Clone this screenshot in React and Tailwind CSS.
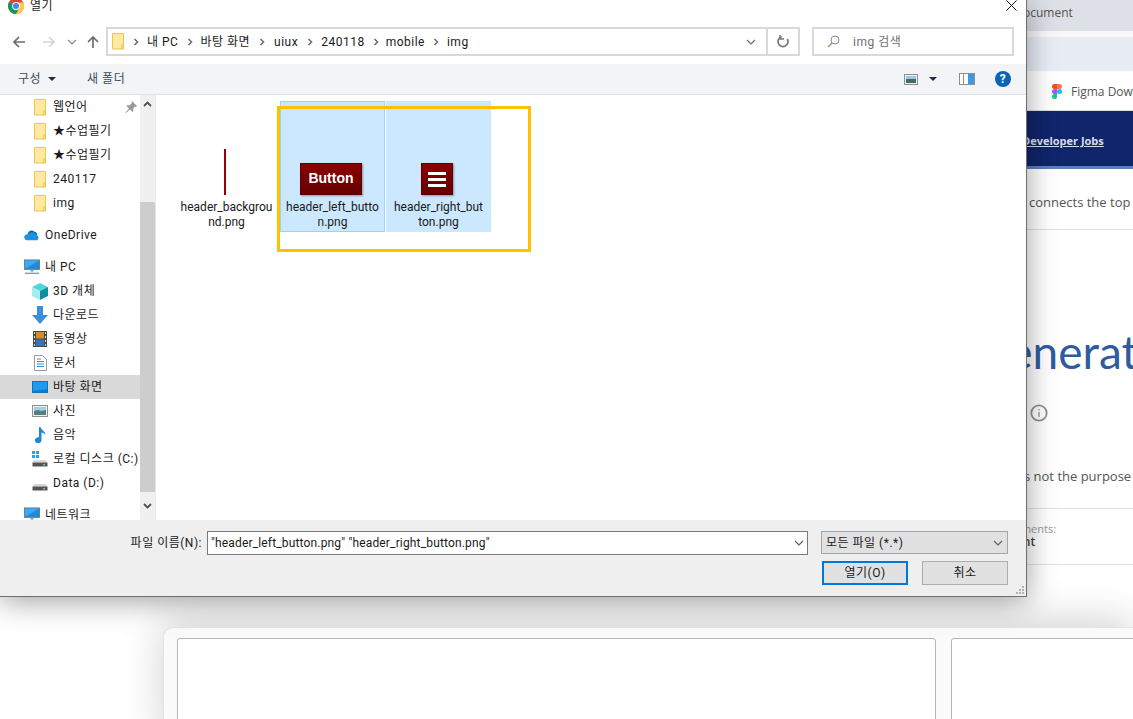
import React from 'react';

const uiFont = 'font-["Roboto","Noto_Sans_CJK_KR",sans-serif]';

const Folder = () => (
  <svg width="14" height="17" viewBox="0 0 14 17" className="shrink-0">
    <path d="M1.5.5h11v15.5h-11z" fill="#ffe9a3" stroke="#eec64c" />
    <path d="M10.5 16V11.5h2V16z" fill="#ffd766" stroke="#eec64c" strokeWidth="0.6" />
  </svg>
);

const Chevron = () => (
  <svg width="6" height="8" viewBox="0 0 6 8" className="shrink-0">
    <path d="M1.5 1l3 3-3 3" fill="none" stroke="#6f6f6f" strokeWidth="1.6" />
  </svg>
);

const DownChevron = ({ color = '#606060' }) => (
  <svg width="10" height="6" viewBox="0 0 10 6" className="shrink-0">
    <path d="M1 1l4 4 4-4" fill="none" stroke={color} strokeWidth="1.2" />
  </svg>
);

const Caret = () => (
  <svg width="8" height="4" viewBox="0 0 8 4" className="shrink-0">
    <path d="M0 0h8L4 4z" fill="#1c2b4a" />
  </svg>
);

const ChromeIcon = () => (
  <svg width="16" height="16" viewBox="0 0 16 16" className="shrink-0">
    <circle cx="8" cy="8" r="8" fill="#db4437" />
    <path d="M8 8L1 4.2A8 8 0 0 0 8 16l3.6-6.5z" fill="#0f9d58" />
    <path d="M8 4.5h7.3A8 8 0 0 1 8 16l3.4-6z" fill="#ffcd40" />
    <circle cx="8" cy="8" r="3.9" fill="#fff" />
    <circle cx="8" cy="8" r="3" fill="#4285f4" />
  </svg>
);

const SideIcon = ({ type }) => {
  if (type === 'onedrive')
    return (
      <svg width="17" height="12" viewBox="0 0 17 12">
        <path d="M4 5a4 4 0 0 1 7-2.5A3.5 3.5 0 0 1 14 6H5z" fill="#0c64b8" />
        <path d="M3.5 11.5a3 3 0 0 1-.5-6 3 3 0 0 1 3-1 4 4 0 0 1 7 1.500 3 3 0 0 1 1 5.500z" fill="#1f8fe0" />
      </svg>
    );
  if (type === 'pc')
    return (
      <svg width="17" height="16" viewBox="0 0 17 16">
        <rect x="0.5" y="0.5" width="16" height="10" fill="#3fa9f0" stroke="#5d7f95" />
        <path d="M1 10L16 1v9z" fill="#1f8ad9" />
        <path d="M7 11h3v2H7z" fill="#7fa3b8" />
        <path d="M1 14h15v1.500H1z" fill="#8a9aa6" />
      </svg>
    );
  if (type === '3d')
    return (
      <svg width="16" height="17" viewBox="0 0 16 17">
        <path d="M8 0l8 4-8 4-8-4z" fill="#4fd6dd" />
        <path d="M0 4l8 4v9l-8-4z" fill="#a5ebee" />
        <path d="M16 4L8 8v9l8-4z" fill="#0d8f9c" />
      </svg>
    );
  if (type === 'download')
    return (
      <svg width="16" height="18" viewBox="0 0 16 18">
        <path d="M5 0h6v9h5l-8 9-8-9h5z" fill="#3c8fdc" />
      </svg>
    );
  if (type === 'video')
    return (
      <svg width="14" height="16" viewBox="0 0 14 16">
        <rect width="14" height="16" fill="#4a4a4a" />
        <rect x="3" y="1" width="8" height="6.500" fill="#d98a2b" />
        <rect x="3" y="8.500" width="8" height="6.500" fill="#3277b8" />
        <path d="M1 1h1v2H1zM1 5h1v2H1zM1 9h1v2H1zM1 13h1v2H1zM12 1h1v2h-1zM12 5h1v2h-1zM12 9h1v2h-1zM12 13h1v2h-1z" fill="#ddd" />
      </svg>
    );
  if (type === 'doc')
    return (
      <svg width="13" height="16" viewBox="0 0 13 16">
        <path d="M.5.5h8l4 4v11H.5z" fill="#fff" stroke="#9a9a9a" />
        <path d="M3 4h4M3 6.500h7M3 9h7M3 11.500h7" stroke="#2f8fd8" />
      </svg>
    );
  if (type === 'desktop')
    return (
      <svg width="16" height="12" viewBox="0 0 16 12">
        <rect x="0.5" y="0.500" width="15" height="11" fill="#1c9bf0" stroke="#1a6fb5" />
        <path d="M1 10l14-2v3H1z" fill="#0d7dd0" />
      </svg>
    );
  if (type === 'photo')
    return (
      <svg width="16" height="12" viewBox="0 0 16 12">
        <rect x="0.5" y="0.500" width="15" height="11" fill="#e8f2f8" stroke="#8f8f8f" />
        <rect x="2" y="2" width="12" height="4" fill="#a8cde4" />
        <path d="M2 6l4-1 3 1 5-1v5H2z" fill="#547f7a" />
      </svg>
    );
  if (type === 'music')
    return (
      <svg width="13" height="16" viewBox="0 0 13 16">
        <path d="M5 0h1.500c.5 3 5 4 5 8-1-1.500-3-2.500-4-2.500V13a3.300 3 0 1 1-2.500-2.700z" fill="#1f86dc" />
      </svg>
    );
  const win = type === 'c';
  return (
    <svg width="16" height="16" viewBox="0 0 16 16">
      {win && <path d="M0 0h3v3H0zM4 0h3v3H4zM0 4h3v3H0zM4 4h3v3H4z" fill="#1fa5e8" />}
      <path d="M2 9h12l1.500 2.500H.5z" fill="#d8d8d8" />
      <rect x="0.500" y="11.500" width="15" height="4" fill="#555" />
      <rect x="11" y="13" width="2" height="1.500" fill="#5fd35f" />
    </svg>
  );
};

const NavRow = ({ icon, indent, active, children, pin }) => (
  <div className={`relative flex h-6 items-center whitespace-nowrap tracking-[0.5px] ${indent ? 'pl-[32px] gap-[5px]' : 'pl-[24px] gap-[5px]'} ${active ? 'bg-[#d9d9d9]' : ''}`}>
    <span className="flex w-[16px] shrink-0 justify-center">{icon}</span>
    <span>{children}</span>
    {pin && (
      <svg width="12" height="12" viewBox="0 0 12 12" className="absolute left-[125px] top-[6px]">
        <path d="M7 0l5 5-1 1-1-.5L8 8l.500 2-1 1L5 8.500 1 12 .500 11.500 4 7.500 1.500 5l1-1 2 .500L7 2 6.500 1z" fill="#9a9a9a" />
      </svg>
    )}
  </div>
);

const FileCell = ({ selected, focused, children, lines }) => (
  <div className={`flex h-[131px] w-[105px] shrink-0 flex-col items-center border ${selected ? 'bg-[#cce8ff]' : ''} ${focused ? 'border-[#99d1ff]' : 'border-transparent'}`}>
    <div className="flex h-[97px] w-full items-end justify-center pb-[4px] pr-[3px]">{children}</div>
    <div className="pt-[1px] text-center text-[12px] leading-[15px] text-[#1a1a1a]">
      {lines.map((l) => (
        <div key={l}>{l}</div>
      ))}
    </div>
  </div>
);

// the page behind the dialog, only its right edge and the bottom can be seen
const BackPage = () => (
  <div className='flex h-[719px] w-[1133px] flex-col overflow-hidden bg-white font-["Open_Sans",sans-serif] text-[#555]'>
    <div className="flex h-[31px] shrink-0 items-center whitespace-nowrap bg-[#dde0e7] pb-[5px] pl-[1023px] text-[12px] text-[#555]">
      ocument
    </div>
    <div className="h-[6px] shrink-0 bg-[#f8f8f8]" />
    <div className="h-[34px] shrink-0 bg-[#e8ecf5]" />
    <div className="flex h-[40px] shrink-0 items-center gap-[9px] whitespace-nowrap border-b border-[#dcdcdc] pl-[1052px] pt-[2px] text-[12px]">
      <svg width="10" height="15" viewBox="0 0 10 15" className="shrink-0">
        <path d="M5 0H2.500a2.500 2.500 0 0 0 0 5H5z" fill="#f24e1e" />
        <path d="M5 0h2.500a2.500 2.500 0 0 1 0 5H5z" fill="#ff7262" />
        <path d="M5 5H2.500a2.500 2.500 0 0 0 0 5H5z" fill="#a259ff" />
        <circle cx="7.500" cy="7.500" r="2.500" fill="#1abcfe" />
        <path d="M5 10H2.500A2.500 2.500 0 1 0 5 12.500z" fill="#0acf83" />
      </svg>
      Figma Download
    </div>
    <div className="flex h-[58px] shrink-0 items-center whitespace-nowrap border-b-[3px] border-[#5b7fb8] bg-[#10256b] pl-[1022px] pt-[6px] text-[11px] font-bold text-[#d6dcec] underline">
      Developer Jobs
    </div>
    <div className="flex h-[61px] shrink-0 items-center whitespace-nowrap border-b border-[#e2e2e2] pl-[1029px] pt-[8px] text-[13px]">
      connects the top
    </div>
    <div className="flex h-[279px] shrink-0 flex-col whitespace-nowrap border-b border-[#e2e2e2]">
      <div className="h-[177px] pl-[975px] pt-[94px] font-['Lato',sans-serif] text-[46px] leading-[56px] text-[#2f5c9f]">Generate</div>
      <svg width="18" height="18" viewBox="0 0 18 18" className="ml-[1030px] mt-[-3px] shrink-0">
        <circle cx="9" cy="9" r="7.700" fill="none" stroke="#8d9499" strokeWidth="1.800" />
        <path d="M9 5v1.500M9 8v5" stroke="#8d9499" strokeWidth="1.300" />
      </svg>
      <div className="pl-[1024px] pt-[45px] text-[13px] leading-[18px]">s not the purpose</div>
    </div>
    <div className="flex h-[56px] shrink-0 flex-col justify-start whitespace-nowrap border-b border-[#e2e2e2] pl-[988px] pt-[13px] text-[11px] leading-[13px] text-[#999]">
      <span className="block h-[13px]">Attachments:</span>
      <span className="block h-[13px] text-[12px] font-semibold text-[#444]">Account</span>
    </div>
    <div className="h-[62px] shrink-0 bg-white" />
    <div className="min-h-0 flex-1 pl-[163px]">
      <div className="flex h-[120px] gap-[15px] rounded-tl-[10px] border-l border-t border-[#e4e4e4] bg-[#fafafa] pl-[13px] pt-[10px] shadow-[0_-6px_40px_rgba(0,0,0,0.18)]">
        <div className="h-[120px] w-[759px] shrink-0 rounded-t-[3px] border border-[#b5b5b5] bg-white" />
        <div className="h-[120px] w-[400px] shrink-0 rounded-t-[3px] border border-[#b5b5b5] bg-white" />
      </div>
    </div>
  </div>
);

const FileDialog = () => (
  <div className={`absolute left-0 top-0 flex h-[597px] w-[1027px] flex-col overflow-hidden border-b border-r border-[#6e6e6e] bg-white text-[12px] text-[#1a1a1a] shadow-[0_4px_28px_rgba(0,0,0,0.38)] ${uiFont}`}>
    {/* title bar */}
    <div className="flex h-[14px] shrink-0 items-center justify-between overflow-visible pl-[8px] pr-[9px]">
      <div className="flex items-center gap-[6px]">
        <span className="mt-[-2px]"><ChromeIcon /></span>
        <span className="mt-[-3px] text-[12px] tracking-[0.5px]">열기</span>
      </div>
      <svg width="11" height="11" viewBox="0 0 11 11" className="mt-[-3px]">
        <path d="M.5.500l10 10M10.500.500l-10 10" stroke="#111" strokeWidth="1" />
      </svg>
    </div>

    {/* address row */}
    <div className="flex h-[50px] shrink-0 items-start pt-[13px]">
      <div className="flex h-[29px] w-[106px] shrink-0 items-center pl-[13px]">
        <svg width="12" height="12" viewBox="0 0 12 12" className="shrink-0">
          <path d="M12 6H1.500M6 1L1 6l5 5" fill="none" stroke="#6d6d6d" strokeWidth="1.700" />
        </svg>
        <svg width="12" height="12" viewBox="0 0 12 12" className="ml-[18px] shrink-0">
          <path d="M0 6h10.500M6 1l5 5-5 5" fill="none" stroke="#d5d5d5" strokeWidth="1.700" />
        </svg>
        <span className="ml-[12px]"><DownChevron color="#8a8a8a" /></span>
        <svg width="12" height="12" viewBox="0 0 12 12" className="ml-[10px] shrink-0">
          <path d="M6 12V1.500M1 6l5-5 5 5" fill="none" stroke="#6d6d6d" strokeWidth="1.700" />
        </svg>
      </div>
      <div className="flex h-[29px] w-[694px] shrink-0 items-center border-2 border-[#d9d9d9]">
        <div className="flex flex-1 items-center gap-[6px] whitespace-nowrap pl-[3px] text-[12px] tracking-[0.5px]">
          <Folder />
          <span className="ml-[2px]"><Chevron /></span>
          <span className="ml-[2px]">내 PC</span>
          <span className="ml-[3px]"><Chevron /></span>
          <span className="ml-[1px]">바탕 화면</span>
          <span className="ml-[3px]"><Chevron /></span>
          <span className="ml-[3px]">uiux</span>
          <span className="ml-[3px]"><Chevron /></span>
          <span className="ml-[2px]">240118</span>
          <span className="ml-[2px]"><Chevron /></span>
          <span className="ml-[1px]">mobile</span>
          <span className="ml-[2px]"><Chevron /></span>
          <span className="ml-[2px]">img</span>
        </div>
        <span className="pr-[10px]"><DownChevron color="#6d6d6d" /></span>
        <div className="flex h-full w-[32px] shrink-0 items-center justify-center border-l-2 border-[#d9d9d9]">
          <svg width="12" height="13" viewBox="0 0 12 13">
            <path d="M3 2.500A5 5 0 1 0 9 2.700" fill="none" stroke="#777" strokeWidth="1.700" transform="rotate(20 6 7)" />
            <path d="M3 0v4h4" fill="none" stroke="#777" strokeWidth="1.400" />
          </svg>
        </div>
      </div>
      <div className="ml-[12px] flex h-[29px] w-[202px] shrink-0 items-center gap-[13px] border-2 border-[#d9d9d9] pl-[13px] tracking-[0.5px] text-[#707070]">
        <svg width="13" height="13" viewBox="0 0 13 13" className="shrink-0">
          <circle cx="8" cy="5" r="4" fill="none" stroke="#8a8a8a" />
          <path d="M5 8l-4 4" stroke="#b08a60" strokeWidth="1.200" />
        </svg>
        img 검색
      </div>
    </div>

    {/* command bar */}
    <div className="flex h-[31px] shrink-0 items-center border-b border-[#e2e2e2] bg-[#f3f4f6] pl-[18px] pr-[15px] tracking-[0.5px] text-[#3b4b63]">
      <span>구성</span>
      <span className="ml-[7px]"><Caret /></span>
      <span className="ml-[31px]">새 폴더</span>
      <div className="ml-auto flex items-center">
        <svg width="14" height="11" viewBox="0 0 14 11" className="shrink-0">
          <rect x="0.500" y="0.500" width="13" height="10" fill="#eef4f8" stroke="#8f8f8f" />
          <rect x="2" y="2" width="10" height="3" fill="#9cc6e2" />
          <path d="M2 5h10v4H2z" fill="#3f6b6b" />
        </svg>
        <span className="ml-[11px]"><Caret /></span>
        <svg width="16" height="12" viewBox="0 0 16 12" className="ml-[22px] shrink-0">
          <rect x="0.500" y="0.500" width="15" height="11" fill="#fff" stroke="#8f8f8f" />
          <rect x="9" y="1" width="6" height="10" fill="#3f97e8" />
          <path d="M4.500 1v10" stroke="#8f8f8f" />
        </svg>
        <span className="ml-[20px] flex h-[16px] w-[16px] items-center justify-center rounded-full bg-[#0a63b5] text-[12px] font-bold text-white">?</span>
      </div>
    </div>

    {/* sidebar + file list */}
    <div className="flex min-h-0 flex-1 overflow-hidden">
      <div className="w-[140px] shrink-0 overflow-hidden text-[12px]">
        <NavRow indent icon={<Folder />} pin>웹언어</NavRow>
        <NavRow indent icon={<Folder />}>★수업필기</NavRow>
        <NavRow indent icon={<Folder />}>★수업필기</NavRow>
        <NavRow indent icon={<Folder />}>240117</NavRow>
        <NavRow indent icon={<Folder />}>img</NavRow>
        <div className="h-2" />
        <NavRow icon={<SideIcon type="onedrive" />}>OneDrive</NavRow>
        <div className="h-2" />
        <NavRow icon={<SideIcon type="pc" />}>내 PC</NavRow>
        <NavRow indent icon={<SideIcon type="3d" />}>3D 개체</NavRow>
        <NavRow indent icon={<SideIcon type="download" />}>다운로드</NavRow>
        <NavRow indent icon={<SideIcon type="video" />}>동영상</NavRow>
        <NavRow indent icon={<SideIcon type="doc" />}>문서</NavRow>
        <NavRow indent active icon={<SideIcon type="desktop" />}>바탕 화면</NavRow>
        <NavRow indent icon={<SideIcon type="photo" />}>사진</NavRow>
        <NavRow indent icon={<SideIcon type="music" />}>음악</NavRow>
        <NavRow indent icon={<SideIcon type="c" />}>로컬 디스크 (C:)</NavRow>
        <NavRow indent icon={<SideIcon type="d" />}>Data (D:)</NavRow>
        <div className="h-2" />
        <NavRow icon={<SideIcon type="pc" />}>네트워크</NavRow>
      </div>

      <div className="flex w-[15px] shrink-0 flex-col items-center bg-[#f0f0f0]">
        <div className="flex h-[18px] shrink-0 items-center justify-center">
          <svg width="9" height="6" viewBox="0 0 9 6"><path d="M1 5l3.500-3.500L8 5" fill="none" stroke="#505050" strokeWidth="1.800" /></svg>
        </div>
        <div className="mt-[89px] h-[290px] w-full shrink-0 bg-[#cdcdcd]" />
        <div className="flex flex-1 items-center justify-center">
          <svg width="9" height="6" viewBox="0 0 9 6"><path d="M1 1l3.500 3.500L8 1" fill="none" stroke="#505050" strokeWidth="1.800" /></svg>
        </div>
      </div>

      <div className="flex min-w-0 flex-1 gap-px border-l border-[#e8e8e8] pl-[18px] pt-[6px]">
        <FileCell lines={['header_backgrou', 'nd.png']}>
          <div className="h-[46px] w-[2px] bg-[#9a0000]" />
        </FileCell>
        <FileCell selected focused lines={['header_left_butto', 'n.png']}>
          <div className="flex h-[32px] w-[62px] items-center justify-center border border-[#5c0000] bg-gradient-to-b from-[#8c0000] to-[#650000] pb-[1px] font-[Liberation_Sans,sans-serif] text-[14px] font-bold text-white shadow-[1px_1px_2px_rgba(0,0,0,0.35)]">
            Button
          </div>
        </FileCell>
        <FileCell selected lines={['header_right_but', 'ton.png']}>
          <div className="flex h-[32px] w-[32px] flex-col items-center justify-center gap-[3px] border border-[#5c0000] bg-gradient-to-b from-[#8c0000] to-[#650000] shadow-[1px_1px_2px_rgba(0,0,0,0.35)]">
            <span className="h-[3px] w-[18px] bg-white" />
            <span className="h-[3px] w-[18px] bg-white" />
            <span className="h-[3px] w-[18px] bg-white" />
          </div>
        </FileCell>
      </div>
    </div>

    {/* footer with file name and buttons */}
    <div className="relative h-[76px] shrink-0 bg-[#efefef] pr-[18px] pt-[11px]">
      <div className="flex items-start">
        <span className="flex h-[24px] w-[202px] shrink-0 items-center justify-end whitespace-nowrap tracking-[0.5px]">파일 이름(N):</span>
        <div className="ml-[5px] flex h-[24px] w-[601px] shrink-0 items-center justify-between border border-[#7a7a7a] bg-white pl-[3px] pr-[3px]">
          <span className="tracking-[0.16px]">"header_left_button.png" "header_right_button.png"</span>
          <DownChevron />
        </div>
        <div className="ml-[13px] flex h-[23px] w-[187px] shrink-0 items-center justify-between border border-[#a0a8ae] bg-[#e1e1e1] pl-[4px] pr-[4px] tracking-[0.5px]">
          <span>모든 파일 (*.*)</span>
          <DownChevron />
        </div>
      </div>
      <div className="mt-[6px] flex justify-end tracking-[0.5px]">
        <button className="flex h-[24px] w-[86px] items-center justify-center border-2 border-[#0078d7] bg-[#e1e1e1] text-[12px]">열기(O)</button>
        <button className="ml-[14px] flex h-[24px] w-[86px] items-center justify-center border border-[#adadad] bg-[#e1e1e1] text-[12px]">취소</button>
      </div>
      <svg width="10" height="10" viewBox="0 0 10 10" className="absolute bottom-[1px] right-[1px]">
        <path d="M7 1h2v2H7zM4 4h2v2H4zM7 4h2v2H7zM1 7h2v2H1zM4 7h2v2H4zM7 7h2v2H7z" fill="#b5b5b5" />
      </svg>
    </div>
  </div>
);

const App = () => {
  return (
    <div className="relative h-[719px] w-[1133px] overflow-hidden">
      <BackPage />
      <FileDialog />
      {/* yellow annotation box drawn over the screenshot */}
      <div className="absolute left-[277px] top-[106px] h-[146px] w-[254px] border-[3px] border-[#ffc000]" />
    </div>
  );
};

export default App;
